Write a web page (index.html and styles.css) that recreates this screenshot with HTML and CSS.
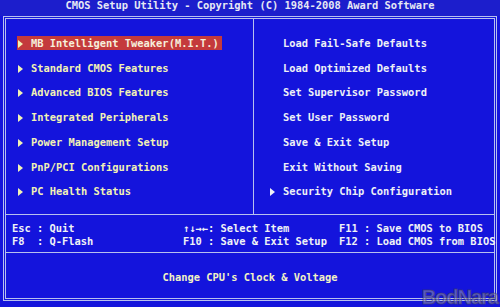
FILE: index.html
```html
<!DOCTYPE html>
<html lang="en">
<head>
    <meta charset="UTF-8">
    <meta name="viewport" content="width=device-width, initial-scale=1.0">
    <title>CMOS Setup Utility</title>
    <link rel="stylesheet" href="styles.css">
</head>
<body>

    <!-- Title bar -->
    <header class="title">CMOS Setup Utility - Copyright (C) 1984-2008 Award Software</header>

    <div class="frame">
        <!-- Main menu -->
        <section class="menu">
            <ul class="col col-left">
                <li><span class="item active"><span class="arrow"></span>MB Intelligent Tweaker(M.I.T.)</span></li>
                <li><span class="item"><span class="arrow"></span>Standard CMOS Features</span></li>
                <li><span class="item"><span class="arrow"></span>Advanced BIOS Features</span></li>
                <li><span class="item"><span class="arrow"></span>Integrated Peripherals</span></li>
                <li><span class="item"><span class="arrow"></span>Power Management Setup</span></li>
                <li><span class="item"><span class="arrow"></span>PnP/PCI Configurations</span></li>
                <li><span class="item"><span class="arrow"></span>PC Health Status</span></li>
            </ul>
            <ul class="col col-right">
                <li><span class="item"><span class="arrow none"></span>Load Fail-Safe Defaults</span></li>
                <li><span class="item"><span class="arrow none"></span>Load Optimized Defaults</span></li>
                <li><span class="item"><span class="arrow none"></span>Set Supervisor Password</span></li>
                <li><span class="item"><span class="arrow none"></span>Set User Password</span></li>
                <li><span class="item"><span class="arrow none"></span>Save &amp; Exit Setup</span></li>
                <li><span class="item"><span class="arrow none"></span>Exit Without Saving</span></li>
                <li><span class="item"><span class="arrow"></span>Security Chip Configuration</span></li>
            </ul>
        </section>

        <!-- Hot keys -->
        <section class="keys">
            <div class="key">Esc : Quit</div>
            <div class="key">↑↓→←: Select Item</div>
            <div class="key">F11 : Save CMOS to BIOS</div>
            <div class="key">F8  : Q-Flash</div>
            <div class="key">F10 : Save &amp; Exit Setup</div>
            <div class="key">F12 : Load CMOS from BIOS</div>
        </section>

        <!-- Status line -->
        <footer class="status">Change CPU's Clock &amp; Voltage</footer>
    </div>

    <div class="watermark">BodNara</div>

</body>
</html>
```

FILE: styles.css
```css
body {
    margin: 0;
    width: 500px;
    height: 307px;
    overflow: hidden;
    position: relative;
    background-color: #1414dc;
    font-family: "DejaVu Sans Mono", "Liberation Mono", monospace;
    font-weight: bold;
    font-size: 10.4px;
    color: #eef0f4;
}
.title {
    height: 16px;
    line-height: 10px;
    text-align: center;
    background-color: #1c1ecc;
    color: #e6e8f4;
}
.frame {
    margin-left: 3px;
    width: 488px;
    height: 279px;
    border: 3px double #b8c0ee;
    display: flex;
    flex-direction: column;
}
.menu {
    height: 195px;
    display: flex;
    border-bottom: 1px solid #b8c0ee;
}
.col {
    list-style: none;
    margin: 0;
    padding: 12px 0 0 0;
    line-height: 24.7px;
}
.col-left {
    width: 248px;
    padding-left: 11px;
    box-sizing: border-box;
    border-right: 1px solid #b8c0ee;
    color: #f2f2b4;
}
.col-right {
    padding-left: 15px;
    color: #eef0f6;
}
.item {
    display: inline-block;
    line-height: 14px;
    padding-right: 3px;
}
.item.active {
    background-color: #c43a3c;
    color: #f6f0dc;
}
.arrow {
    display: inline-block;
    width: 0;
    height: 0;
    border-top: 4px solid transparent;
    border-bottom: 4px solid transparent;
    border-left: 5px solid #f2f2b4;
    margin: 0 8px 0 1px;
    vertical-align: -1px;
}
.col-right .arrow {
    border-left-color: #eef0f6;
}
.arrow.none {
    border-left-color: transparent !important;
}
.keys {
    height: 38px;
    box-sizing: border-box;
    padding: 7px 0 0 6px;
    display: grid;
    grid-template-columns: 171px 156px auto;
    grid-auto-rows: 13px;
    line-height: 13px;
    white-space: pre;
    border-bottom: 1px solid #b8c0ee;
    color: #f0f2f6;
}
.status {
    flex: 1;
    padding-top: 17px;
    line-height: 14px;
    text-align: center;
    color: #f2f2c4;
}
.watermark {
    position: absolute;
    right: 2px;
    bottom: 0;
    font-family: "Liberation Sans", sans-serif;
    font-size: 20px;
    line-height: 20px;
    font-weight: bold;
    letter-spacing: -1px;
    color: rgba(150, 150, 180, 0.55);
    -webkit-text-stroke: 1px rgba(60, 60, 90, 0.6);
}
```
